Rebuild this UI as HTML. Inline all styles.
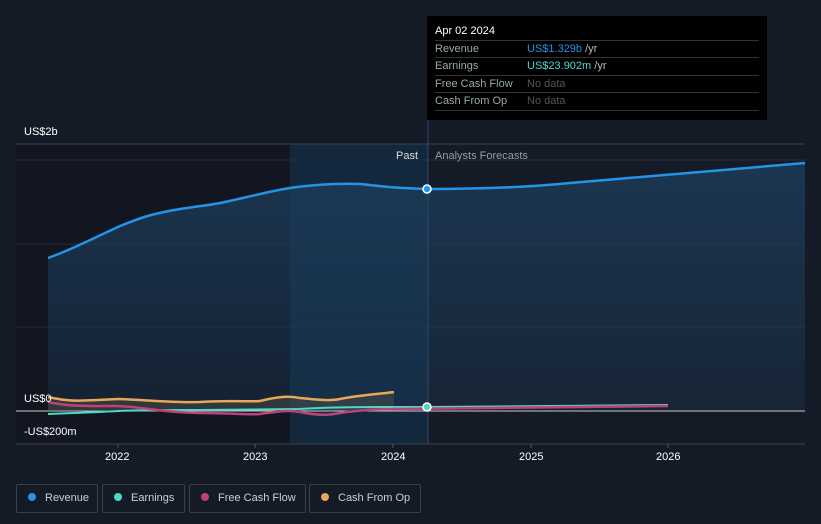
<!DOCTYPE html><html><head><style>
body{margin:0;width:821px;height:524px;background:#151b26;font-family:"Liberation Sans",sans-serif;position:relative;overflow:hidden;color:#fff}
.t{position:absolute;font-size:11px}
.tip{position:absolute;left:427px;top:16px;width:340px;height:104px;background:#000}
.row{position:absolute;left:8px;width:324px;border-top:1px solid #333;font-size:11px;color:#9aa;height:17px;line-height:17px}
.leg{position:absolute;top:484px;height:27px;border:1px solid #3a3f4a;border-radius:2px;font-size:11px;color:#ccd;line-height:27px}
.leg i{display:inline-block;width:8px;height:8px;border-radius:50%;margin:0 9px 0 11px;vertical-align:-0px}
</style></head><body>
<svg width="821" height="524" style="position:absolute;left:0;top:0">
<defs><linearGradient id="g" x1="0" y1="0" x2="0" y2="1"><stop offset="0" stop-color="#1d3d5c" stop-opacity=".8"/><stop offset="1" stop-color="#1d3d5c" stop-opacity=".3"/></linearGradient></defs>
<rect x="16" y="144" width="274" height="300" fill="#111620"/>
<rect x="290" y="144" width="138" height="300" fill="#13283d"/>
<line x1="16" y1="144" x2="805" y2="144" stroke="#3a4150"/>
<line x1="16" y1="160" x2="805" y2="160" stroke="#262d3a"/>
<line x1="16" y1="244" x2="805" y2="244" stroke="#262d3a"/>
<line x1="16" y1="327" x2="805" y2="327" stroke="#262d3a"/>
<line x1="16" y1="444" x2="805" y2="444" stroke="#3a4150"/>
<path d="M48,258 C70,250 90,240 120,226 C140,218 150,214 180,209 C200,206 210,205 220,203 C240,199 270,191 290,188 C310,185 340,183 360,184 C380,186 390,188 427,189 C480,189 530,187 570,183 C620,179 680,174 805,163 L805,410 L48,410Z" fill="url(#g)"/>
<path d="M48,258 C70,250 90,240 120,226 C140,218 150,214 180,209 C200,206 210,205 220,203 C240,199 270,191 290,188 C310,185 340,183 360,184 C380,186 390,188 427,189 C480,189 530,187 570,183 C620,179 680,174 805,163" fill="none" stroke="#2394e6" stroke-width="2.5"/>
<line x1="16" y1="411" x2="805" y2="411" stroke="#ccc" stroke-width="1"/>
<path d="M48,397 C70,402 80,401 118,399 C150,400 170,403 200,402 C230,400 250,402 260,401 C280,396 290,396 300,398 C320,400 330,401 340,399 C360,395 380,394 394,392 L394,410 L48,410Z" fill="#5a5a4a" opacity=".4"/>
<path d="M48,397 C70,402 80,401 118,399 C150,400 170,403 200,402 C230,400 250,402 260,401 C280,396 290,396 300,398 C320,400 330,401 340,399 C360,395 380,394 394,392" fill="none" stroke="#e8a85a" stroke-width="2.5"/>
<path d="M48,414 L100,412 C130,410 160,410 200,410 L300,409 C330,407 360,407 427,407 L668,405" fill="none" stroke="#4fd8c6" stroke-width="2"/>
<path d="M48,402 C70,407 90,406 118,406 C150,408 170,413 200,413 C230,413 250,415 260,414 C280,411 290,410 300,412 C320,416 330,415 340,413 C360,410 380,409 400,409 L668,406" fill="none" stroke="#c0407a" stroke-width="2.5"/>
<line x1="428" y1="16" x2="428" y2="444" stroke="#2a4a66"/>
<circle cx="427" cy="189" r="4" fill="#2394e6" stroke="#fff" stroke-width="1.5"/>
<circle cx="427" cy="407" r="4" fill="#4fd8c6" stroke="#fff" stroke-width="1.5"/>
<g stroke="#555"><line x1="118" y1="444" x2="118" y2="448"/><line x1="255" y1="444" x2="255" y2="448"/><line x1="393" y1="444" x2="393" y2="448"/><line x1="531" y1="444" x2="531" y2="448"/><line x1="668" y1="444" x2="668" y2="448"/></g>
</svg>
<div class="t" style="left:24px;top:126px">US$2b</div>
<div class="t" style="left:24px;top:393px">US$0</div>
<div class="t" style="left:24px;top:426px">-US$200m</div>
<div class="t" style="left:396px;top:150px;color:#ddd">Past</div>
<div class="t" style="left:435px;top:150px;color:#99a">Analysts Forecasts</div>
<div class="t" style="left:105px;top:451px">2022</div>
<div class="t" style="left:243px;top:451px">2023</div>
<div class="t" style="left:381px;top:451px">2024</div>
<div class="t" style="left:519px;top:451px">2025</div>
<div class="t" style="left:656px;top:451px">2026</div>
<div class="tip">
<div style="position:absolute;left:8px;top:9px;font-size:11px">Apr 02 2024</div>
<div class="row" style="top:24px">Revenue<span style="position:absolute;left:92px;color:#2394e6">US$1.329b <span style="color:#bbb">/yr</span></span></div>
<div class="row" style="top:41px">Earnings<span style="position:absolute;left:92px;color:#4fd8c6">US$23.902m <span style="color:#bbb">/yr</span></span></div>
<div class="row" style="top:59px">Free Cash Flow<span style="position:absolute;left:92px;color:#555">No data</span></div>
<div class="row" style="top:76px;border-bottom:1px solid #333">Cash From Op<span style="position:absolute;left:92px;color:#555">No data</span></div>
</div>
<div class="leg" style="left:16px;width:80px"><i style="background:#2394e6"></i>Revenue</div>
<div class="leg" style="left:102px;width:81px"><i style="background:#4fd8c6"></i>Earnings</div>
<div class="leg" style="left:189px;width:115px"><i style="background:#c0407a"></i>Free Cash Flow</div>
<div class="leg" style="left:309px;width:110px"><i style="background:#e8a85a"></i>Cash From Op</div>
</body></html>
